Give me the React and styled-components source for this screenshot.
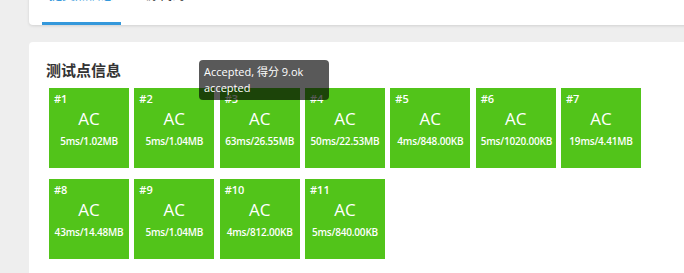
import React from "react";
import styled, { createGlobalStyle } from "styled-components";

const Global = createGlobalStyle`
  body {
    margin: 0;
    background: #eeeeee;
    font-family: "Open Sans", "Noto Sans CJK SC", sans-serif;
    overflow: hidden;
  }
`;

const Page = styled.div`
  padding-left: 29px;
  margin-top: -33px;
  width: 700px;
`;

const TopCard = styled.div`
  background: #fff;
  border-radius: 4px;
  box-shadow: 0 1px 3px rgba(0, 0, 0, 0.12);
  padding-left: 13px;
  display: flex;
  gap: 18px;
  height: 58px;
  align-items: flex-end;
`;

const Tab = styled.div`
  font-size: 13px;
  line-height: 18px;
  white-space: nowrap;
  padding: 0 7px 19px;
  color: ${(p) => (p.active ? "#3498db" : "#333")};
  border-bottom: 3px solid ${(p) => (p.active ? "#3498db" : "transparent")};
`;

const Card = styled.div`
  position: relative;
  margin-top: 17px;
  background: #fff;
  border-radius: 4px;
  padding: 17px 17px 20px;
  min-height: 260px;
`;

const Title = styled.h3`
  margin: 0;
  font-size: 15px;
  line-height: 22px;
  font-weight: bold;
  color: #333;
`;

const Grid = styled.div`
  display: flex;
  flex-wrap: wrap;
  column-gap: 5.33px;
  row-gap: 11px;
  margin: 7px 0 0 3px;
  width: 600px;
`;

const Box = styled.div`
  width: 80px;
  height: 80px;
  background: #52c41a;
  color: #fff;
  display: flex;
  flex-direction: column;
  padding: 4px 5px;
  box-sizing: border-box;
`;

const Num = styled.div`
  font-size: 11px;
  line-height: 14px;
  font-weight: 600;
`;

const Status = styled.div`
  font-size: 17px;
  line-height: 24px;
  text-align: center;
  margin-top: 1px;
`;

const Stat = styled.div`
  font-size: 10px;
  line-height: 16px;
  text-align: center;
  margin-top: 2px;
  font-weight: 600;
  letter-spacing: -0.2px;
`;

const Tooltip = styled.div`
  position: absolute;
  left: 170px;
  top: 18px;
  width: 130px;
  height: 40px;
  box-sizing: border-box;
  padding: 4px 5px;
  background: rgba(0, 0, 0, 0.65);
  border-radius: 4px;
  color: #fff;
  font-size: 11px;
  line-height: 16px;
`;

const cases = [
  ["5ms", "1.02MB"],
  ["5ms", "1.04MB"],
  ["63ms", "26.55MB"],
  ["50ms", "22.53MB"],
  ["4ms", "848.00KB"],
  ["5ms", "1020.00KB"],
  ["19ms", "4.41MB"],
  ["43ms", "14.48MB"],
  ["5ms", "1.04MB"],
  ["4ms", "812.00KB"],
  ["5ms", "840.00KB"],
];

export default function App() {
  return (
    <Page>
      <Global />
      <TopCard>
        <Tab active>提交点信息</Tab>
        <Tab>源代码</Tab>
      </TopCard>
      <Card>
        <Title>测试点信息</Title>
        <Grid>
          {cases.map(([t, m], i) => (
            <Box key={i}>
              <Num>#{i + 1}</Num>
              <Status>AC</Status>
              <Stat>
                {t}/{m}
              </Stat>
            </Box>
          ))}
        </Grid>
        <Tooltip>
          Accepted, 得分 9.ok
          <br />
          accepted
        </Tooltip>
      </Card>
    </Page>
  );
}
